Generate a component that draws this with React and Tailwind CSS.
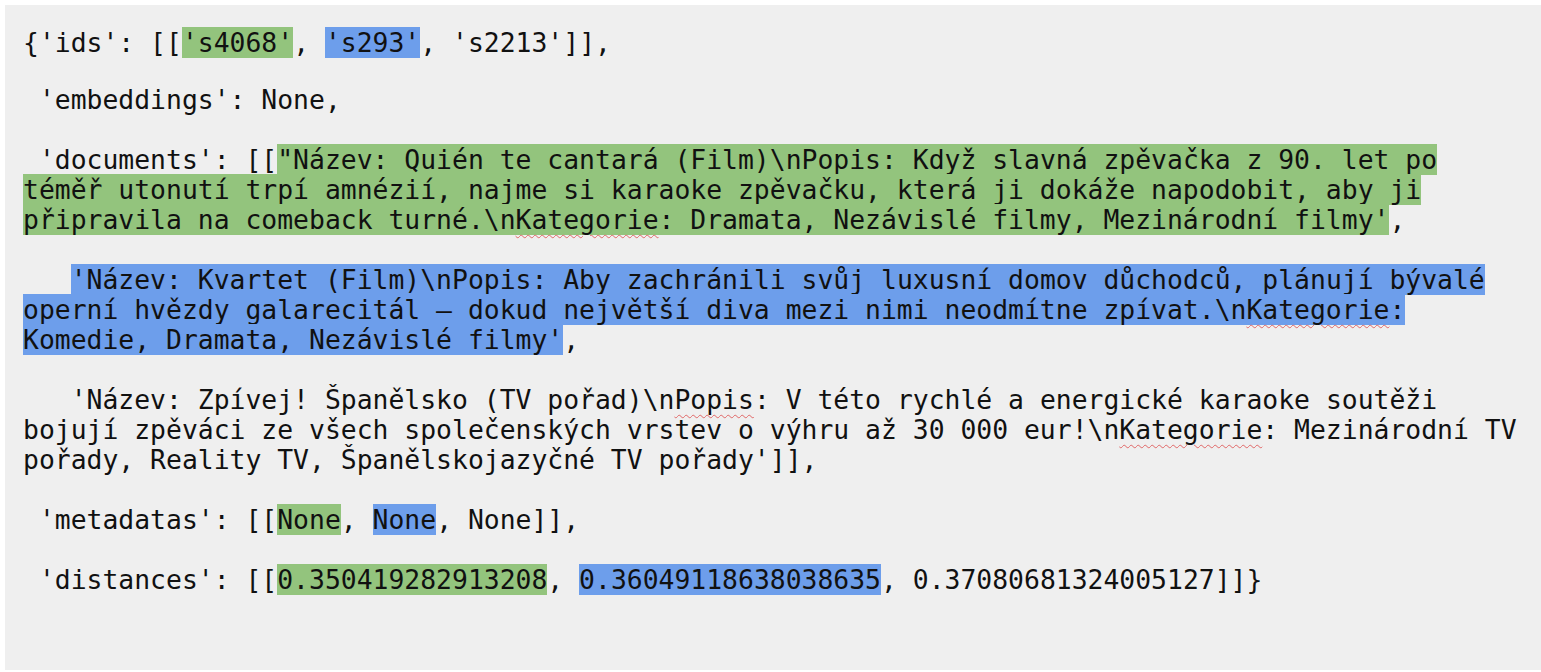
import React from "react";

const G = ({ children }) => <span className="bg-[#93c47d]">{children}</span>;
const B = ({ children }) => <span className="bg-[#6d9eeb]">{children}</span>;
const W = ({ children }) => (
  <span className="underline decoration-wavy decoration-[#e06666] decoration-1 underline-offset-[5px]">{children}</span>
);

const mono = { fontFamily: '"DejaVu Sans Mono", "Liberation Mono", monospace' };

const App = () => {
  return (
    <div className="w-[1541px] h-[672px] bg-white pt-[5px] pl-[5px] overflow-hidden">
      <div className="h-[665px] bg-[#efefef] pt-[21px] pl-[18px] text-[26.4px] text-[#111]" style={mono}>
        {/* ids */}
        <pre className="whitespace-pre leading-[34px]" style={mono}>
          {"{'ids': [["}
          <G>{"'s4068'"}</G>
          {", "}
          <B>{"'s293'"}</B>
          {", 's2213']],"}
        </pre>

        {/* rest of the dict */}
        <pre className="mt-[25px] whitespace-pre leading-[30px]" style={mono}>
          {" 'embeddings': None,\n\n 'documents': [["}
          <G>
            {'"Název: Quién te cantará (Film)\\n'}
            <W>Popis</W>
            {": Když slavná zpěvačka z 90. let po"}
          </G>
          {"\n"}
          <G>{"téměř utonutí trpí amnézií, najme si karaoke zpěvačku, která ji dokáže napodobit, aby ji"}</G>
          {"\n"}
          <G>
            {"připravila na comeback turné.\\n"}
            <W>Kategorie</W>
            {": Dramata, Nezávislé filmy, Mezinárodní filmy'"}
          </G>
          {",\n\n   "}
          <B>
            {"'Název: Kvartet (Film)\\n"}
            <W>Popis</W>
            {": Aby zachránili svůj luxusní domov důchodců, plánují bývalé"}
          </B>
          {"\n"}
          <B>
            {"operní hvězdy galarecitál – dokud největší diva mezi nimi neodmítne zpívat.\\n"}
            <W>Kategorie</W>
            {":"}
          </B>
          {"\n"}
          <B>{"Komedie, Dramata, Nezávislé filmy'"}</B>
          {",\n\n   'Název: Zpívej! Španělsko (TV pořad)\\n"}
          <W>Popis</W>
          {": V této rychlé a energické karaoke soutěži\nbojují zpěváci ze všech společenských vrstev o výhru až 30 000 eur!\\n"}
          <W>Kategorie</W>
          {": Mezinárodní TV\npořady, Reality TV, Španělskojazyčné TV pořady']],\n\n 'metadatas': [["}
          <G>None</G>
          {", "}
          <B>None</B>
          {", None]],\n\n 'distances': [["}
          <G>0.350419282913208</G>
          {", "}
          <B>0.36049118638038635</B>
          {", 0.37080681324005127]]}"}
        </pre>
      </div>
    </div>
  );
};

export default App;
